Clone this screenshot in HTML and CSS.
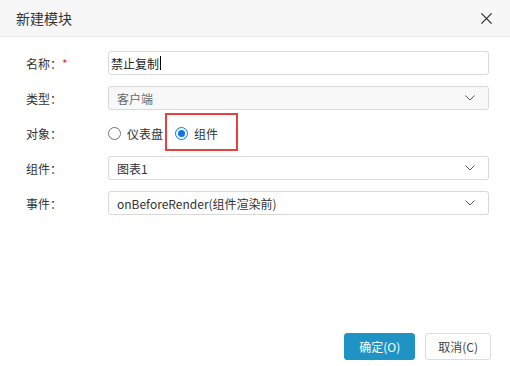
FILE: index.html
```html
<!DOCTYPE html>
<html lang="zh">
<head>
	<meta charset="utf-8">
	<title>新建模块</title>
	<link rel="stylesheet" href="styles.css">
</head>
<body>
	<section class="dialog">
		<header class="dialog_head">
			<span class="dialog_title">新建模块</span>
			<svg class="closeButton" viewBox="0 0 14 14">
				<line x1="1.5" y1="1.5" x2="12.5" y2="12.5"/>
				<line x1="12.5" y1="1.5" x2="1.5" y2="12.5"/>
			</svg>
		</header>

		<section class="dialog_body">
			<div class="formRow">
				<label class="formRow_label">名称：<span class="required">*</span></label>
				<div class="field field_text">禁止复制<span class="caret"></span></div>
			</div>
			<div class="formRow">
				<label class="formRow_label">类型：</label>
				<div class="field field_select field_disabled">
					<span>客户端</span>
					<svg class="chevron" viewBox="0 0 10 6"><polyline points="0.5,0.5 5,5 9.5,0.5"/></svg>
				</div>
			</div>
			<div class="formRow">
				<label class="formRow_label">对象：</label>
				<div class="radioGroup">
					<span class="radio"><span class="radio_dot"></span>仪表盘</span>
					<span class="radio radio_checked"><span class="radio_dot"></span>组件<span class="highlightBox"></span></span>
				</div>
			</div>
			<div class="formRow">
				<label class="formRow_label">组件：</label>
				<div class="field field_select">
					<span>图表1</span>
					<svg class="chevron" viewBox="0 0 10 6"><polyline points="0.5,0.5 5,5 9.5,0.5"/></svg>
				</div>
			</div>
			<div class="formRow">
				<label class="formRow_label">事件：</label>
				<div class="field field_select">
					<span>onBeforeRender(组件渲染前)</span>
					<svg class="chevron" viewBox="0 0 10 6"><polyline points="0.5,0.5 5,5 9.5,0.5"/></svg>
				</div>
			</div>
		</section>

		<footer class="dialog_foot">
			<button class="button button_primary">确定(O)</button>
			<button class="button">取消(C)</button>
		</footer>
	</section>
</body>
</html>
```

FILE: styles.css
```css
html, body{ width:100%; height:100%; margin:0px; overflow:hidden; background-color:#fff; }
body{ font-family: "Noto Sans CJK SC", "Liberation Sans", sans-serif; font-size:12px; color:#333; }

.dialog{ width:510px; height:366px; display:flex; flex-direction:column; }

.dialog_head{
	height:36px;
	display:flex; align-items:center; justify-content:space-between;
	padding:0 17px 0 16px;
	background-color:#f7f7f7;
	border-bottom:1px solid #e6e6e6;
}
.dialog_title{ font-size:14px; color:#333; }
.closeButton{ width:13px; height:13px; stroke:#333; stroke-width:1.4; fill:none; }

.dialog_body{
	flex:1;
	padding:14px 21px 0 26px;
	display:flex; flex-direction:column; gap:11px;
}

.formRow{ height:24px; display:flex; align-items:center; }
.formRow_label{ width:82px; flex:none; }
.required{ color:#e53935; }

.field{
	flex:1;
	box-sizing:border-box; height:24px;
	display:flex; align-items:center;
	border:1px solid #d9d9d9; border-radius:3px;
	background-color:#fff;
}
.field_text{ padding-left:2px; color:#222; }
.caret{ width:1px; height:14px; background-color:#000; margin-left:1px; }
.field_select{ justify-content:space-between; padding:0 13px 0 8px; }
.field_disabled{ background-color:#f8f8f8; color:#666; }
.chevron{ width:10px; height:6px; stroke:#555; stroke-width:1; fill:none; }

.radioGroup{ display:flex; align-items:center; gap:12px; }
.radio{ position:relative; display:flex; align-items:center; gap:6px; }
.radio_dot{
	width:13px; height:13px; box-sizing:border-box;
	border:1px solid #757575; border-radius:50%;
	display:flex; align-items:center; justify-content:center;
}
.radio_checked .radio_dot{ border:1.5px solid #0f74e6; }
.radio_checked .radio_dot::after{ content:""; width:7px; height:7px; border-radius:50%; background-color:#0f74e6; }

.highlightBox{
	position:absolute; left:-10px; top:-12px;
	width:73px; height:38px; box-sizing:border-box;
	border:2px solid #e8413d;
}

.dialog_foot{
	display:flex; justify-content:flex-end; gap:10px;
	padding:0 19px 6px 0;
}
.button{
	height:27px; padding:0 12px;
	font-family:inherit; font-size:12px; color:#444;
	border:1px solid #dcdcdc; border-radius:3px;
	background-color:#fff;
}
.button_primary{ width:71px; color:#fff; background-color:#1f93c4; border-color:#1f93c4; }
```
